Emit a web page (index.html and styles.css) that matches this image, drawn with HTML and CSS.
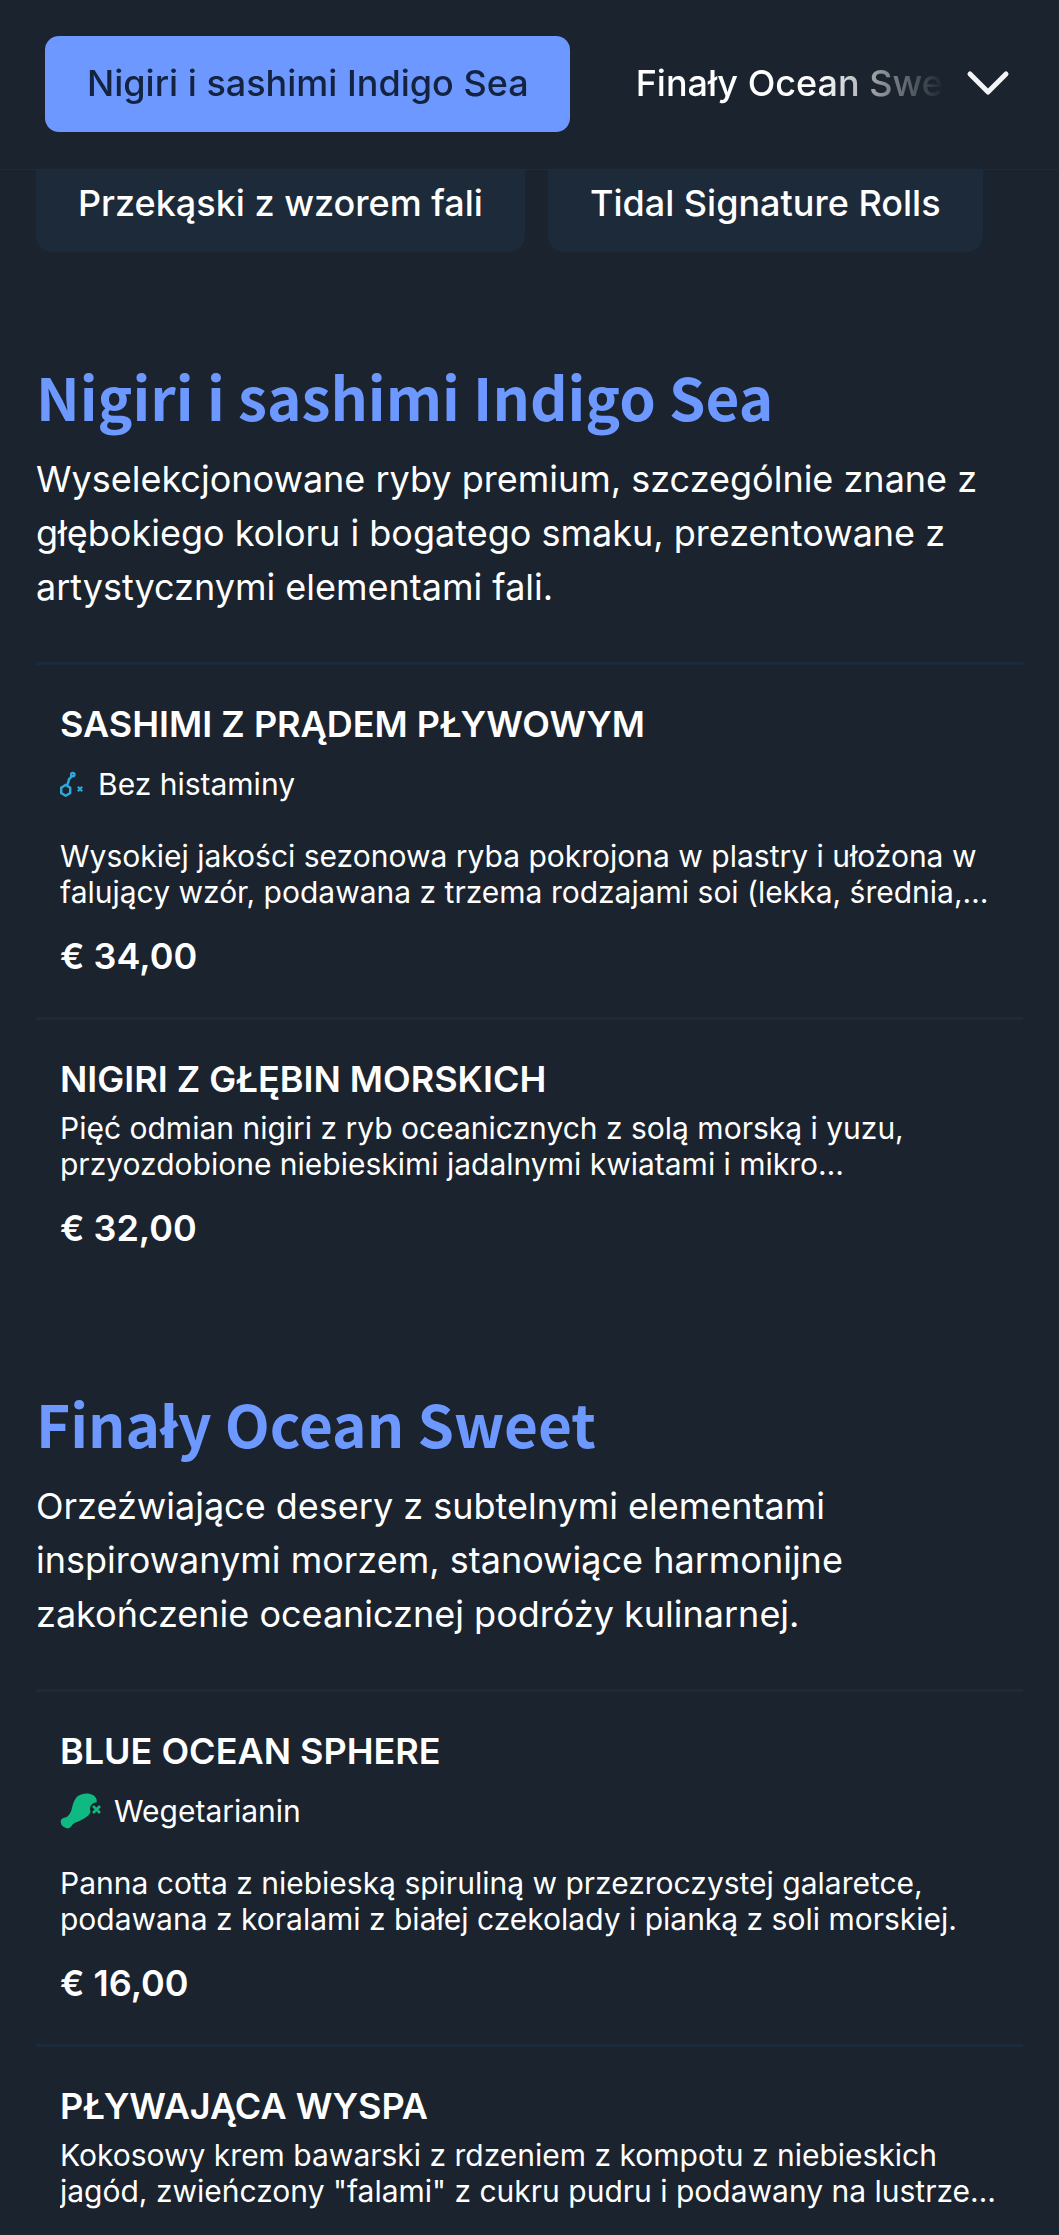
FILE: index.html
```html
<!DOCTYPE html>
<html lang="pl">
<head>
<meta charset="utf-8">
<title>Menu</title>
<link rel="stylesheet" href="styles.css">
</head>
<body>
<div class="page">
  <header class="topbar">
    <div class="tabs">
      <button class="tab tab-active">Nigiri i sashimi Indigo Sea</button>
      <button class="tab">Finały Ocean Sweet</button>
    </div>
    <svg class="chevron" viewBox="0 0 44 28" width="44" height="28" aria-hidden="true"><path d="M4 5 L22 23 L40 5"/></svg>
  </header>
  <div class="chips-clip">
    <div class="chips">
      <div class="chip">Przekąski z wzorem fali</div>
      <div class="chip">Tidal Signature Rolls</div>
    </div>
  </div>
  <main>
    <section class="section">
      <h2 class="section-title">Nigiri i sashimi Indigo Sea</h2>
      <p class="section-desc">Wyselekcjonowane ryby premium, szczególnie znane z głębokiego koloru i bogatego smaku, prezentowane z artystycznymi elementami fali.</p>
      <article class="item">
        <h3 class="item-name">SASHIMI Z PRĄDEM PŁYWOWYM</h3>
        <div class="tag">
          <svg class="tag-icon" viewBox="0 0 26 26" width="26" height="26" aria-hidden="true">
            <g fill="none" stroke="#2fa9d9" stroke-width="2.4"><path d="M5.7 14 L10.2 16.7 V22 L5.7 24.7 L1.2 22 V16.7 Z"/><path d="M7 14.6 L8.7 10 V8.8 L11.6 5.4"/><circle cx="12.8" cy="3.6" r="1.7"/></g>
            <path d="M17.8 15.8 L22.2 20.2 M22.2 15.8 L17.8 20.2" stroke="#2fa9d9" stroke-width="2" fill="none"/>
          </svg>
          <span>Bez histaminy</span>
        </div>
        <p class="item-desc">Wysokiej jakości sezonowa ryba pokrojona w plastry i ułożona w falujący wzór, podawana z trzema rodzajami soi (lekka, średnia, ciemna) oraz świeżo tartym wasabi.</p>
        <div class="price">€ 34,00</div>
      </article>
      <article class="item">
        <h3 class="item-name">NIGIRI Z GŁĘBIN MORSKICH</h3>
        <p class="item-desc item-desc-tight">Pięć odmian nigiri z ryb oceanicznych z solą morską i yuzu, przyozdobione niebieskimi jadalnymi kwiatami i mikro zielonymi&nbsp;listkami&nbsp;morskimi.</p>
        <div class="price">€ 32,00</div>
      </article>
    </section>
    <section class="section">
      <h2 class="section-title">Finały Ocean Sweet</h2>
      <p class="section-desc">Orzeźwiające desery z subtelnymi elementami inspirowanymi morzem, stanowiące harmonijne zakończenie oceanicznej podróży kulinarnej.</p>
      <article class="item">
        <h3 class="item-name">BLUE OCEAN SPHERE</h3>
        <div class="tag">
          <svg class="tag-icon" viewBox="0 0 42 38" width="42" height="38" aria-hidden="true">
            <path fill="#10b981" d="M18 4 C22 1 29 0.5 33 3 C36 5 37.5 8 36.5 10.5 C33 10.5 30.5 13 30 16 C30 19 31 20 30 21 C28 25 22 28 17 30 C14 31 12.5 32 11.5 34 C10 36.5 7 37 5 35.5 C3 35 1 33 1 31 C0 28 2 26 5 25.5 C8 25 10 22 11.5 18 C13 12 14 7.5 18 4 Z"/>
            <path d="M33 14 L40 21 M40 14 L33 21" stroke="#10b981" stroke-width="2.6" fill="none"/>
          </svg>
          <span>Wegetarianin</span>
        </div>
        <p class="item-desc">Panna cotta z niebieską spiruliną w przezroczystej galaretce, podawana z koralami z białej czekolady i pianką z soli morskiej.</p>
        <div class="price">€ 16,00</div>
      </article>
      <article class="item">
        <h3 class="item-name">PŁYWAJĄCA WYSPA</h3>
        <p class="item-desc item-desc-tight">Kokosowy krem bawarski z rdzeniem z kompotu z niebieskich jagód, zwieńczony "falami" z cukru pudru i podawany na lustrze z niebieskiego curaçao i mango.</p>
      </article>
    </section>
  </main>
</div>
</body>
</html>
```
FILE: styles.css
```css
* { box-sizing: border-box; }
html, body { margin: 0; padding: 0; background: #1a232e; }
body { font-family: "Inter", "Liberation Sans", sans-serif; color: #fff; }
.page { width: 1059px; height: 2235px; overflow: hidden; }

.topbar {
  height: 170px;
  display: flex;
  align-items: flex-start;
  border-bottom: 1px solid #1f2a37;
  padding: 36px 48px 0 45px;
}
.tabs {
  width: 900px;
  display: flex;
  gap: 24px;
  overflow: hidden;
  -webkit-mask-image: linear-gradient(to right, #000 0, #000 775px, transparent 900px);
  mask-image: linear-gradient(to right, #000 0, #000 775px, transparent 900px);
}
.tab {
  flex: none;
  height: 96px;
  border: 0;
  border-radius: 14px;
  padding: 0 41px 2px 42px;
  background: transparent;
  color: #fff;
  font: 500 36px "Inter", sans-serif;
}
.tab-active { background: #6c98ff; color: #14233f; }
.chevron { flex: none; margin: 33px 0 0 21px; }
.chevron path { fill: none; stroke: #f3f4f6; stroke-width: 5; stroke-linecap: round; stroke-linejoin: round; }

.chips-clip { height: 82px; overflow: hidden; display: flex; align-items: flex-end; padding-left: 36px; }
.chips { display: flex; gap: 23px; }
.chip {
  height: 120px;
  padding: 49px 42px 0;
  background: #1c2a3a;
  border-radius: 16px;
  font-weight: 500;
  font-size: 36px;
}

.section { padding: 0 36px; }
.section-title {
  margin: 0;
  padding-top: 102px;
  color: #6c98ff;
  font: 700 58.5px/84px "Noto Sans CJK SC", "Noto Sans", sans-serif;
}
.section-desc { margin: 0; font-size: 36px; line-height: 54px; padding-top: 14px; padding-bottom: 48px; }
.item { border-top: 3px solid #1c2a3a; padding: 36.5px 24px 39px; }
.item:last-child { padding-bottom: 29px; }
.item-name { margin: 0; font-size: 36px; font-weight: 600; line-height: 44px; }
.tag { display: flex; align-items: center; gap: 12px; font-size: 30px; height: 40px; margin-top: 18px; }
.item-desc {
  margin: 34.5px 0 0;
  font-size: 30px;
  line-height: 36px;
  display: -webkit-box;
  -webkit-box-orient: vertical;
  -webkit-line-clamp: 2;
  overflow: hidden;
}
.item-desc-tight { margin-top: 9.5px; }
.price { margin-top: 24px; font-size: 36px; font-weight: 600; line-height: 44px; }
```
